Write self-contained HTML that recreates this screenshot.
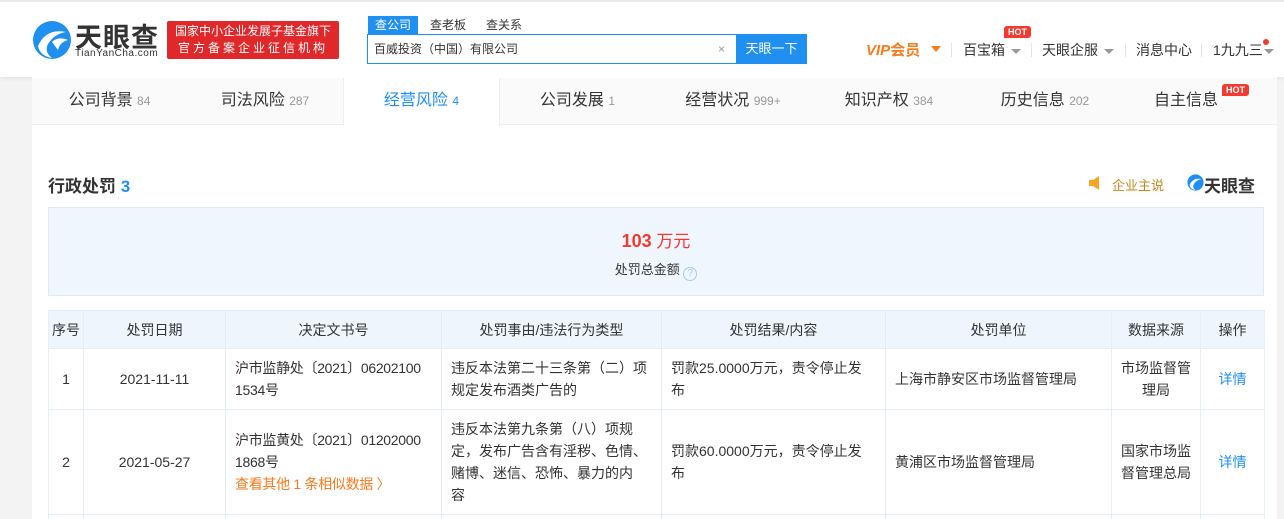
<!DOCTYPE html>
<html><head><meta charset="utf-8"><style>
*{margin:0;padding:0;box-sizing:border-box}
html,body{width:1284px;height:519px;overflow:hidden}
body{background:#f3f3f3;font-family:"Liberation Sans","Noto Sans CJK SC",sans-serif;color:#333;font-size:14px;position:relative}
.abs{position:absolute}
.hdr{left:0;top:0;width:1284px;height:77px;background:#fff;border-top:2px solid #e8e8e8;box-shadow:0 2px 4px rgba(0,0,0,.06)}
.main{left:32px;top:77px;width:1245px;height:442px;background:#fff}
.nav{left:32px;top:78px;width:1245px;height:47px;background:#fafafa;border-bottom:1px solid #eee}
.tab{position:absolute;top:0;height:47px;line-height:46px;font-size:16px;color:#333;text-align:center}
.tab small{font-size:12px;color:#999}
table{border-collapse:collapse;position:absolute;left:48px;top:310px;width:1216px;table-layout:fixed}
td,th{border:1px solid #e4eef7;font-size:14px;font-weight:normal;color:#333;line-height:22px;white-space:nowrap;overflow:hidden}
th{background:#eef5fc;height:38px;text-align:center}
td{padding:0 0 0 9px}
.c{text-align:center;padding:0}
.hot{background:#f4392f;color:#fff;font-size:9px;font-weight:bold;border-radius:3px 3px 3px 0;padding:0 4px;line-height:12px;position:absolute}
.dd{display:inline-block;width:0;height:0;border-left:5px solid transparent;border-right:5px solid transparent;border-top:5px solid #999;vertical-align:middle;margin-left:6px}
</style></head><body>
<div class="abs hdr"></div>
<svg class="abs" style="left:32px;top:20px" width="40" height="40" viewBox="0 0 40 40"><circle cx="20" cy="20" r="19" fill="#1f8ff0"/><path d="M6 26 Q14 8 34 12 Q22 14 16 24 Q12 32 20 38 Q8 36 6 26Z" fill="#fff"/><path d="M20 22 Q26 16 36 20 Q28 22 26 30 Z" fill="#fff"/></svg>
<div class="abs" style="left:75px;top:16px;font-size:27px;font-weight:bold;color:#333;letter-spacing:1px">天眼查</div>
<div class="abs" style="left:75px;top:48px;font-size:10px;color:#333;letter-spacing:.5px">TianYanCha.com</div>
<div class="abs" style="left:167px;top:21px;width:172px;height:38px;background:#e0282b;border-radius:2px;color:#fff;font-size:12px;line-height:17px;padding:2px 0;text-align:center;white-space:nowrap">国家中小企业发展子基金旗下<br><span style="letter-spacing:3px">官方备案企业征信机构</span></div>
<div class="abs" style="left:368px;top:16px;width:50px;height:19px;background:#1f8ff0;color:#fff;font-size:12px;text-align:center;line-height:18px">查公司</div>
<div class="abs" style="left:430px;top:16px;font-size:12px;color:#333;line-height:18px">查老板</div>
<div class="abs" style="left:486px;top:16px;font-size:12px;color:#333;line-height:18px">查关系</div>
<div class="abs" style="left:367px;top:34px;width:370px;height:30px;border:1px solid #1f8ff0;border-right:0;background:#fff;font-size:12px;line-height:28px;padding-left:6px">百威投资（中国）有限公司<span style="position:absolute;right:12px;color:#999">×</span></div>
<div class="abs" style="left:736px;top:34px;width:71px;height:30px;background:#1f8ff0;color:#fff;font-size:13px;text-align:center;line-height:30px">天眼一下</div>
<div class="abs" style="left:866px;top:39px;font-size:15px;font-weight:bold;color:#f87b1d;font-style:italic">VIP<span style="font-style:normal">会员</span></div>
<div class="abs" style="left:931px;top:46px;border-left:5px solid transparent;border-right:5px solid transparent;border-top:6px solid #f87b1d"></div>
<div class="abs" style="left:963px;top:40px;font-size:14px">百宝箱<span class="dd"></span></div>
<div class="hot" style="left:1004px;top:26px">HOT</div>
<div class="abs" style="left:1042px;top:40px;font-size:14px">天眼企服<span class="dd"></span></div>
<div class="abs" style="left:1136px;top:40px;font-size:14px">消息中心</div>
<div class="abs" style="left:1213px;top:40px;font-size:14px">1九九三<span class="dd" style="margin-left:1px"></span></div>
<div class="abs" style="left:1263px;top:39px;width:6px;height:6px;border-radius:3px;background:#f4392f"></div>
<div class="abs" style="left:951px;top:43px;height:14px;border-left:1px solid #e5e5e5"></div>
<div class="abs" style="left:1031px;top:43px;height:14px;border-left:1px solid #e5e5e5"></div>
<div class="abs" style="left:1125px;top:43px;height:14px;border-left:1px solid #e5e5e5"></div>
<div class="abs" style="left:1201px;top:43px;height:14px;border-left:1px solid #e5e5e5"></div>

<div class="abs main"></div>
<div class="abs nav">
<div class="tab" style="left:0;width:155px">公司背景 <small>84</small></div>
<div class="tab" style="left:155px;width:156px">司法风险 <small>287</small></div>
<div class="tab" style="left:311px;width:157px;background:#fff;border-left:1px solid #eee;border-right:1px solid #eee;height:48px;color:#1f8ff0">经营风险 <small style="color:#1f8ff0">4</small></div>
<div class="tab" style="left:468px;width:155px">公司发展 <small>1</small></div>
<div class="tab" style="left:623px;width:156px">经营状况 <small>999+</small></div>
<div class="tab" style="left:779px;width:156px">知识产权 <small>384</small></div>
<div class="tab" style="left:935px;width:156px">历史信息 <small>202</small></div>
<div class="tab" style="left:1122px;width:64px">自主信息</div>
</div>
<div class="hot" style="left:1222px;top:84px">HOT</div>

<div class="abs" style="left:48px;top:172px;font-size:17px;font-weight:bold;color:#333">行政处罚 <span style="color:#1f8ff0">3</span></div>
<svg class="abs" style="left:1088px;top:175px" width="16" height="16" viewBox="0 0 16 16"><path d="M1 5h4l6-4v14l-6-4H1z" fill="#f5a623"/></svg>
<div class="abs" style="left:1112px;top:175px;font-size:13px;color:#c8881a">企业主说</div>
<svg class="abs" style="left:1187px;top:174px" width="17" height="17" viewBox="0 0 40 40"><circle cx="20" cy="20" r="19" fill="#1f8ff0"/><path d="M6 26 Q14 8 34 12 Q22 14 16 24 Q12 32 20 38 Q8 36 6 26Z" fill="#fff"/></svg>
<div class="abs" style="left:1204px;top:172px;font-size:17px;font-weight:bold;color:#333">天眼查</div>

<div class="abs" style="left:48px;top:207px;width:1216px;height:89px;background:#eff6fd;border:1px solid #dfeaf5"></div>
<div class="abs" style="left:48px;top:227px;width:1216px;text-align:center;color:#f4392f;font-size:18px;font-weight:bold">103<span style="font-weight:normal;font-size:17px"> 万元</span></div>
<div class="abs" style="left:48px;top:259px;width:1216px;text-align:center;font-size:13px">处罚总金额 <span style="display:inline-block;width:14px;height:14px;border:1px solid #a9cbea;border-radius:7px;font-size:10px;line-height:12px;color:#a9cbea;vertical-align:-2px">?</span></div>

<table>
<colgroup><col style="width:35px"><col style="width:142px"><col style="width:216px"><col style="width:220px"><col style="width:224px"><col style="width:226px"><col style="width:89px"><col style="width:64px"></colgroup>
<tr><th>序号</th><th>处罚日期</th><th>决定文书号</th><th>处罚事由/违法行为类型</th><th>处罚结果/内容</th><th>处罚单位</th><th>数据来源</th><th>操作</th></tr>
<tr style="height:61px"><td class="c">1</td><td class="c">2021-11-11</td><td style="letter-spacing:-.3px">沪市监静处〔2021〕06202100<br>1534号</td><td>违反本法第二十三条第（二）项<br>规定发布酒类广告的</td><td>罚款25.0000万元，责令停止发<br>布</td><td>上海市静安区市场监督管理局</td><td class="c">市场监督管<br>理局</td><td class="c" style="color:#1f8ff0">详情</td></tr>
<tr style="height:105px"><td class="c">2</td><td class="c">2021-05-27</td><td style="letter-spacing:-.3px">沪市监黄处〔2021〕01202000<br>1868号<br><span style="color:#f87b1d">查看其他 1 条相似数据 〉</span></td><td>违反本法第九条第（八）项规<br>定，发布广告含有淫秽、色情、<br>赌博、迷信、恐怖、暴力的内<br>容</td><td>罚款60.0000万元，责令停止发<br>布</td><td>黄浦区市场监督管理局</td><td class="c">国家市场监<br>督管理总局</td><td class="c" style="color:#1f8ff0">详情</td></tr>
<tr style="height:20px"><td></td><td></td><td></td><td></td><td></td><td></td><td></td><td></td></tr>
</table>
</body></html>
